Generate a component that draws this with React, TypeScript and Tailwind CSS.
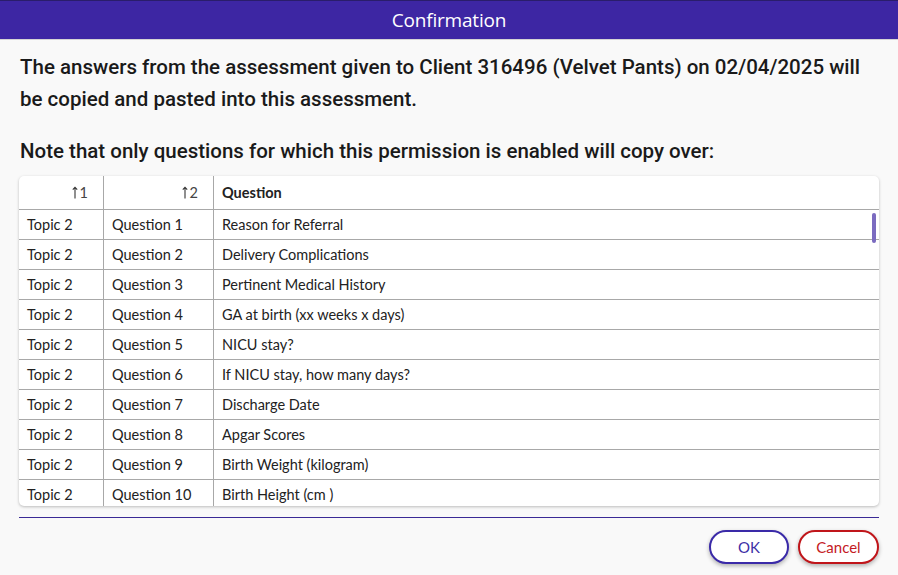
import React from "react";

const rows = [
  ["Topic 2", "Question 1", "Reason for Referral"],
  ["Topic 2", "Question 2", "Delivery Complications"],
  ["Topic 2", "Question 3", "Pertinent Medical History"],
  ["Topic 2", "Question 4", "GA at birth (xx weeks x days)"],
  ["Topic 2", "Question 5", "NICU stay?"],
  ["Topic 2", "Question 6", "If NICU stay, how many days?"],
  ["Topic 2", "Question 7", "Discharge Date"],
  ["Topic 2", "Question 8", "Apgar Scores"],
  ["Topic 2", "Question 9", "Birth Weight (kilogram)"],
  ["Topic 2", "Question 10", "Birth Height (cm )"],
];

function SortLabel({ n }: { n: number }) {
  return (
    <span className="inline-flex items-center gap-[2px] text-[14.5px] text-[#444]">
      <svg width="6" height="13" viewBox="0 0 6 13" className="mb-[1px]">
        <path d="M3 12.5V1.5M0.8 3.6L3 1.2L5.2 3.6" stroke="#333" strokeWidth="1.1" fill="none" />
      </svg>
      {n}
    </span>
  );
}

export default function App() {
  return (
    <div className="w-[898px] h-[575px] bg-[#f9f9f9] overflow-hidden">
      <div className="h-[40px] bg-[#3d26a3] border-t border-t-[#2a1d6b] border-b border-b-[#d4d4d4] flex items-center justify-center">
        <span className="text-white text-[19px] font-['Open_Sans',sans-serif] tracking-[-0.2px]">
          Confirmation
        </span>
      </div>

      <div className="px-5 pt-[11px]">
        <p className="font-['Roboto',sans-serif] font-medium text-[20.5px] leading-[32px] text-[#1a1a1a]">
          The answers from the assessment given to Client 316496 (Velvet Pants) on 02/04/2025 will
          <br />
          be copied and pasted into this assessment.
        </p>
        <p className="mt-5 font-['Roboto',sans-serif] font-medium text-[20.5px] leading-[32px] text-[#1a1a1a]">
          Note that only questions for which this permission is enabled will copy over:
        </p>

        <div className="relative mt-[9px] -mx-px bg-white rounded-[5px] shadow-[0_1px_3px_rgba(0,0,0,0.25)] overflow-hidden font-['Lato',sans-serif] text-[14.5px] text-[#222]">
          <div className="flex h-[34px] border-b border-[#a8a8a8]">
            <div className="w-[85px] border-r border-[#a8a8a8] flex items-center justify-end pr-[15px]">
              <SortLabel n={1} />
            </div>
            <div className="w-[110px] border-r border-[#a8a8a8] flex items-center justify-end pr-[15px]">
              <SortLabel n={2} />
            </div>
            <div className="flex-1 flex items-center pl-2 font-bold">Question</div>
          </div>
          <div className="h-[296px] overflow-hidden">
            {rows.map((r, i) => (
              <div key={i} className="flex h-[30px] border-b border-[#a8a8a8]">
                <div className="w-[85px] border-r border-[#a8a8a8] flex items-center pl-2">{r[0]}</div>
                <div className="w-[110px] border-r border-[#a8a8a8] flex items-center pl-2">{r[1]}</div>
                <div className="flex-1 flex items-center pl-2">{r[2]}</div>
              </div>
            ))}
          </div>
          <div className="absolute right-[3px] top-[37px] w-[4px] h-[30px] rounded-full bg-[#7b6bc0]" />
        </div>

        <div className="mt-[11px] -mx-px h-px bg-[#3a2a96]" />

        <div className="flex justify-end gap-[9px] mt-[12px] -mr-px font-['Lato',sans-serif] text-[15px]">
          <button className="w-[80px] h-[34px] rounded-full border-2 border-[#3a2aa8] bg-white text-[#3d2fa6] shadow-[0_2px_4px_rgba(0,0,0,0.3)]">
            OK
          </button>
          <button className="w-[81px] h-[34px] rounded-full border-2 border-[#c0151a] bg-white text-[#c41a1f] shadow-[0_2px_4px_rgba(0,0,0,0.3)]">
            Cancel
          </button>
        </div>
      </div>
    </div>
  );
}
